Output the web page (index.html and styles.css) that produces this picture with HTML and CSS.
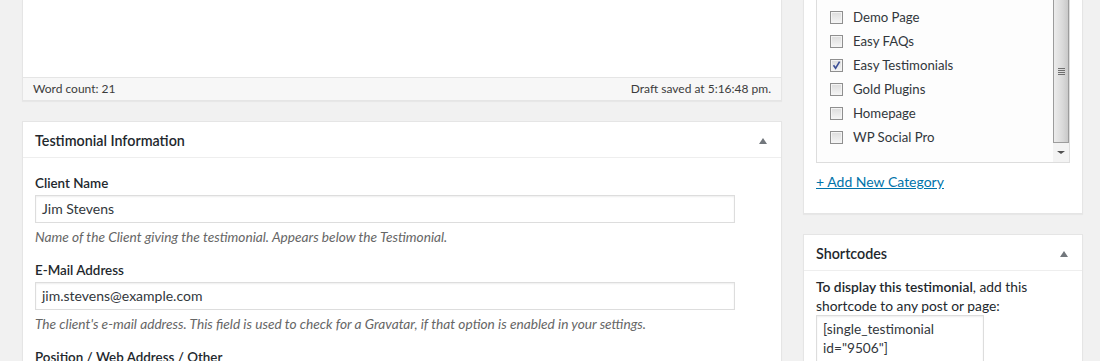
FILE: index.html
```html
<!DOCTYPE html>
<html>
<head>
<meta charset="utf-8">
<title>Edit Testimonial</title>
<link rel="stylesheet" href="styles.css">
</head>
<body>
<div class="wrap">
  <div class="main">
    <div class="editor">
      <div class="editor-area"></div>
      <div class="status">
        <span class="word-count">Word count: 21</span>
        <span class="autosave">Draft saved at 5:16:48 pm.</span>
      </div>
    </div>

    <div class="postbox">
      <div class="hndle">
        <h2>Testimonial Information</h2>
        <span class="toggle"></span>
      </div>
      <div class="inside">
        <div class="field">
          <div class="label">Client Name</div>
          <div class="textbox">Jim Stevens</div>
          <p class="desc">Name of the Client giving the testimonial. Appears below the Testimonial.</p>
        </div>
        <div class="field">
          <div class="label">E-Mail Address</div>
          <div class="textbox">jim.stevens@example.com</div>
          <p class="desc">The client's e-mail address. This field is used to check for a Gravatar, if that option is enabled in your settings.</p>
        </div>
        <div class="field">
          <div class="label">Position / Web Address / Other</div>
        </div>
      </div>
    </div>
  </div>

  <div class="side">
    <div class="panel cat-panel">
      <div class="cat-list">
        <ul class="cats">
          <li><span class="cb"></span>Demo Page</li>
          <li><span class="cb"></span>Easy FAQs</li>
          <li><span class="cb checked"><svg viewBox="0 0 11 11" width="11" height="11"><path d="M2.5 5.2 L4.6 8.2 L8.6 1.6" fill="none" stroke="#3c4f96" stroke-width="1.6"/></svg></span>Easy Testimonials</li>
          <li><span class="cb"></span>Gold Plugins</li>
          <li><span class="cb"></span>Homepage</li>
          <li><span class="cb"></span>WP Social Pro</li>
        </ul>
        <div class="scrollbar">
          <div class="thumb"><span class="grip"></span></div>
          <div class="arrow-btn"><span class="arrow-down"></span></div>
        </div>
      </div>
      <a class="add-cat" href="#">+ Add New Category</a>
    </div>

    <div class="panel postbox side-box">
      <div class="hndle">
        <h2>Shortcodes</h2>
        <span class="toggle"></span>
      </div>
      <div class="sc-inside">
        <p class="sc-text"><strong>To display this testimonial</strong>, add this shortcode to any post or page:</p>
        <div class="sc-area">[single_testimonial id="9506"]</div>
      </div>
    </div>
  </div>
</div>
</body>
</html>
```

FILE: styles.css
```css
* { box-sizing: border-box; }

html, body {
  margin: 0;
  padding: 0;
  height: 100%;
  overflow: hidden;
}

body {
  background: #f1f1f1;
  color: #23282d;
  font-family: "Lato", "Liberation Sans", sans-serif;
  font-size: 13px;
  line-height: 1.4;
}

.wrap {
  display: flex;
  gap: 21px;
  padding-left: 22px;
  align-items: flex-start;
}

.main {
  width: 760px;
  flex: none;
}

.side {
  width: 280px;
  flex: none;
}

/* Editor */
.editor {
  background: #fff;
  border: 1px solid #e5e5e5;
  border-top: none;
  box-shadow: 0 1px 1px rgba(0,0,0,0.04);
  margin-bottom: 20px;
}

.editor-area {
  height: 77px;
  background: #fff;
}

.status {
  height: 23px;
  border-top: 1px solid #e5e5e5;
  background: #f7f7f7;
  display: flex;
  justify-content: space-between;
  align-items: center;
  padding: 0 10px;
  font-size: 12px;
  color: #3c3c3c;
}

/* Postbox */
.postbox {
  background: #fff;
  border: 1px solid #e5e5e5;
  box-shadow: 0 1px 1px rgba(0,0,0,0.04);
}

.hndle {
  display: flex;
  align-items: center;
  justify-content: space-between;
  height: 36px;
  padding: 0 12px;
  border-bottom: 1px solid #eee;
}

.hndle h2 {
  margin: 0;
  font-size: 14.3px;
  font-weight: 600;
  color: #23282d;
  line-height: 19px;
  padding-top: 2px;
}

.toggle {
  width: 0;
  height: 0;
  border-left: 4px solid transparent;
  border-right: 4px solid transparent;
  border-bottom: 6px solid #72777c;
  margin-right: 2px;
  margin-top: 3px;
}

.inside {
  padding: 15px 12px 0;
}

.field {
  margin-bottom: 13px;
}

.label {
  font-weight: 600;
  font-size: 13.4px;
  line-height: 20px;
}

.textbox {
  width: 700px;
  height: 28px;
  margin-top: 2px;
  border: 1px solid #ddd;
  box-shadow: inset 0 1px 2px rgba(0,0,0,0.07);
  padding: 0 6px;
  font-size: 14px;
  line-height: 26px;
  color: #32373c;
}

.desc {
  margin: 4px 0 0;
  font-style: italic;
  color: #666;
  line-height: 20px;
  font-size: 13.7px;
}

/* Side panels */
.panel {
  background: #fff;
  border: 1px solid #e5e5e5;
  box-shadow: 0 1px 1px rgba(0,0,0,0.04);
}

.cat-panel {
  border-top: none;
  padding: 0 12px 21px;
  margin-bottom: 20px;
}

.cat-list {
  display: flex;
  height: 163px;
  border: 1px solid #ddd;
  border-top: none;
  background: #fdfdfd;
}

.cats {
  list-style: none;
  margin: 0;
  padding: 5px 0 0 13px;
  flex: 1;
}

.cats li {
  height: 24px;
  display: flex;
  align-items: center;
  gap: 10px;
  font-size: 13.2px;
  color: #32373c;
}

.cb {
  width: 13px;
  height: 13px;
  border: 1px solid #8f8f8f;
  background: linear-gradient(#dcdcdc, #f5f5f5);
  box-shadow: inset 0 0 0 1px #f4f4f4;
  display: flex;
  align-items: center;
  justify-content: center;
  flex: none;
}

.cb svg { display: block; }

.scrollbar {
  width: 16px;
  flex: none;
  display: flex;
  flex-direction: column;
  background: #f0f0f0;
}

.thumb {
  flex: 1;
  border: 1px solid #9c9c9c;
  border-top: none;
  background: linear-gradient(to right, #ececec, #dadada 60%, #c9c9c9);
  display: flex;
  align-items: center;
  justify-content: center;
}

.grip {
  width: 7px;
  height: 7px;
  background: repeating-linear-gradient(#6e6e6e 0 1px, transparent 1px 2px);
}

.arrow-btn {
  height: 19px;
  display: flex;
  align-items: center;
  justify-content: center;
  background: #f3f3f3;
}

.arrow-down {
  width: 0;
  height: 0;
  border-left: 4px solid transparent;
  border-right: 4px solid transparent;
  border-top: 3px solid #505050;
}

.add-cat {
  display: inline-block;
  margin-top: 9px;
  line-height: 20px;
  font-size: 14px;
  color: #0073aa;
  text-decoration: underline;
}

.sc-inside {
  padding: 6px 12px 14px;
}

.sc-text {
  margin: 0;
  line-height: 19px;
  font-size: 13.8px;
}

.sc-text strong { font-weight: 600; }

.sc-area {
  width: 168px;
  border: 1px solid #ddd;
  box-shadow: inset 0 1px 2px rgba(0,0,0,0.07);
  padding: 3px 6px 10px;
  line-height: 19px;
  font-size: 13.7px;
  color: #32373c;
}
```
